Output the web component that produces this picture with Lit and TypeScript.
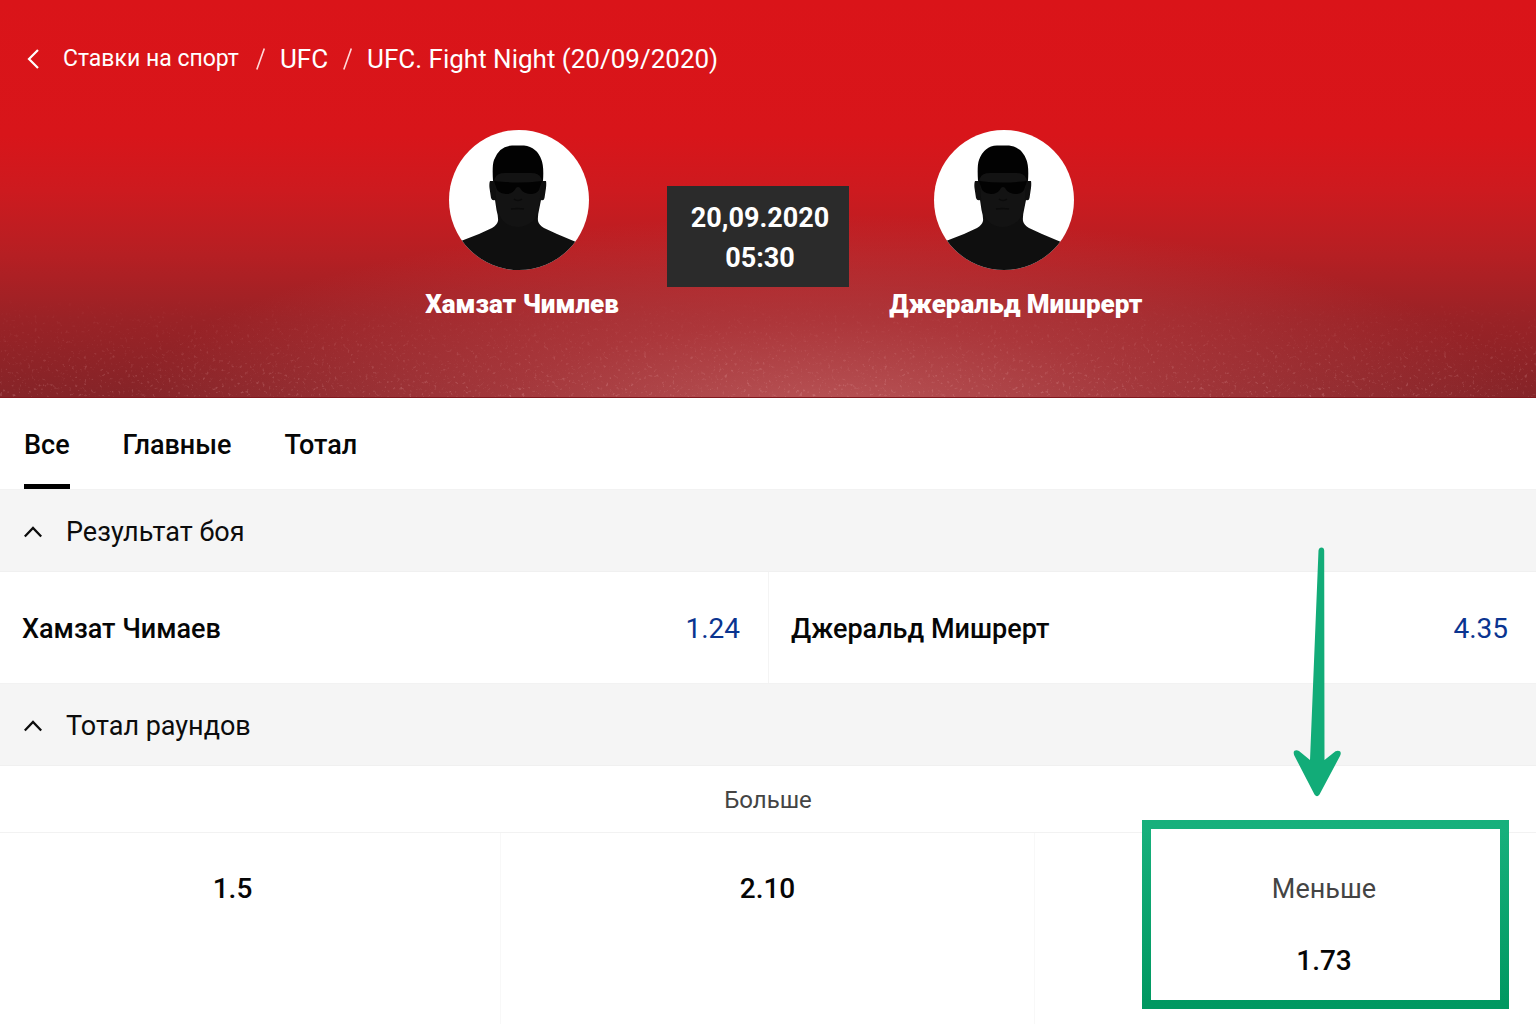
import { LitElement, html, css, svg } from "lit";
import { customElement, property, state } from "lit/decorators.js";
import { classMap } from "lit/directives/class-map.js";

@customElement("fighter-avatar")
export class FighterAvatar extends LitElement {
  static styles = css`
    :host {
      display: block;
      width: 140px;
      height: 140px;
    }
    .portrait {
      display: block;
      width: 100%;
      height: 100%;
    }
  `;

  render() {
    return html`
      <svg class="portrait" viewBox="0 0 140 140" aria-hidden="true">
        <defs>
          <clipPath id="round"><circle cx="70" cy="70" r="70" /></clipPath>
        </defs>
        <g clip-path="url(#round)">
          <rect width="140" height="140" fill="#fff" />
          <path
            d="M45 40 L44 51 L41 51 Q40 53 40.5 58 L42 68 Q43 71 46 70 L47.5 80 Q49.5 87 49 91 Q48 95 43 98 L30 104 L12 111 L-2 119 V142 H142 V119 L127 112 L108 104 L95 98 Q90 95 89 91 Q88.5 86 90 80 L92 70 Q95 71 95.5 68 L97 58 Q97.5 53 97 51 L94 51 L93 40 Z"
            fill="#0f0f0f"
          />
          <path
            d="M46 48 Q46 42 56 42 H82 Q92 42 92 48 L91 68 Q90 84 84 91 Q76 97 69 97 Q60 97 54 91 Q48 84 47 68 Z"
            fill="#131313"
          />
          <path
            d="M44 51 Q43 35 45 30 Q50 16 63 15.5 H75 Q88 17 92.5 30 Q95 36 94 51 L92 48 Q90 43 82 43 H56 Q48 43 46 48 Z"
            fill="#020202"
          />
          <path
            d="M45 51 Q69 54 93 51 L91 57 Q90 63 83 64 Q74 64 71 58 Q69 56 67 58 Q64 64 57 64 Q48 63 47 57 Z"
            fill="#020202"
          />
          <path d="M65 69 Q69 72 73 69" fill="none" stroke="#0b0b0b" stroke-width="1.5" />
          <path d="M62 79 Q69 78 75 79" fill="none" stroke="#0b0b0b" stroke-width="1.5" />
        </g>
      </svg>
    `;
  }
}

@customElement("market-header")
export class MarketHeader extends LitElement {
  @property() label = "";
  @property({ type: Boolean }) open = true;

  static styles = css`
    :host {
      display: block;
    }
    .title {
      margin: 0;
      font: inherit;
    }
    .toggle {
      box-sizing: border-box;
      display: flex;
      align-items: center;
      gap: 24px;
      width: 100%;
      padding: 25px 24px 22px;
      border: 0;
      border-top: 1px solid #f2f2f2;
      border-bottom: 1px solid #f0f0f0;
      background: #f5f5f5;
      color: #0c0c0c;
      font: inherit;
      font-size: 27px;
      line-height: 34px;
      text-align: left;
      cursor: pointer;
    }
    .chevron {
      flex: none;
      width: 18px;
      height: 12px;
    }
    .chevron--closed {
      transform: rotate(180deg);
    }
  `;

  render() {
    return html`
      <h2 class="title">
        <button
          class="toggle"
          type="button"
          aria-expanded=${this.open ? "true" : "false"}
          @click=${() => this.dispatchEvent(new CustomEvent("market-toggle"))}
        >
          <svg
            class=${classMap({ chevron: true, "chevron--closed": !this.open })}
            viewBox="0 0 18 12"
            aria-hidden="true"
          >
            <path d="M0.8 10.5 L9 2 L17.2 10.5" fill="none" stroke="#0c0c0c" stroke-width="2.3" />
          </svg>
          <span>${this.label}</span>
        </button>
      </h2>
    `;
  }
}

@customElement("app-root")
export class AppRoot extends LitElement {
  @state() private tab = "Все";
  @state() private closed: string[] = [];

  private tabs = ["Все", "Главные", "Тотал"];

  private outcomes = [
    { name: "Хамзат Чимаев", odds: "1.24" },
    { name: "Джеральд Мишрерт", odds: "4.35" },
  ];

  static styles = css`
    :host {
      display: flex;
      flex-direction: column;
      min-height: 100vh;
      overflow: hidden;
      background: #fff;
      color: #060606;
      font-family: Roboto, "Liberation Sans", sans-serif;
    }
    button {
      margin: 0;
      border: 0;
      background: none;
      color: inherit;
      font: inherit;
      cursor: pointer;
    }
    .hero {
      position: relative;
      padding: 42px 24px 75px;
      border-bottom: 1px solid #82181e;
      background:
        radial-gradient(ellipse 46% 52% at 54% 106%, rgba(206, 104, 106, 0.75), rgba(204, 84, 88, 0.4) 48%, rgba(200, 60, 64, 0) 100%),
        linear-gradient(#da1419 0%, #d8151a 34%, #cd1a1f 48%, #b61f23 64%, #9a2226 80%, #852428 100%);
      color: #fff;
    }
    .dust {
      position: absolute;
      inset: 0;
      width: 100%;
      height: 100%;
      opacity: 0.2;
      mask-image: linear-gradient(transparent 74%, #000 100%);
    }
    .crumbs {
      position: relative;
      display: flex;
      align-items: center;
      gap: 15px;
      font-size: 26px;
      line-height: 34px;
    }
    .crumb {
      color: inherit;
      text-decoration: none;
    }
    .crumb--root {
      padding-right: 2px;
      font-size: 23px;
    }
    .back {
      display: flex;
      padding: 0 9px 0 3px;
    }
    .back-icon {
      width: 12px;
      height: 20px;
    }
    .slash {
      width: 9px;
      height: 22px;
    }
    .match {
      position: relative;
      display: grid;
      grid-template-columns: 1fr auto 1fr;
      align-items: start;
      padding: 54px 28px 0 0;
    }
    .fighter {
      display: flex;
      flex-direction: column;
      align-items: flex-start;
      gap: 16px;
    }
    .fighter--home {
      justify-self: end;
    }
    .fighter--away {
      justify-self: start;
    }
    .fighter--home .face {
      margin-left: 24px;
    }
    .fighter--away .face {
      margin-left: 45px;
    }
    .fighter-name {
      font-size: 26px;
      font-weight: 900;
      line-height: 36px;
      white-space: nowrap;
    }
    .kickoff {
      display: flex;
      flex-direction: column;
      align-items: center;
      margin: 56px 40px 0 48px;
      padding: 12px 20px 9px 24px;
      background: #2b2b2b;
      font-size: 27px;
      font-weight: 700;
      line-height: 40px;
    }
    .tabs {
      display: flex;
      gap: 53px;
      padding: 0 24px;
    }
    .tab {
      padding: 31px 0 23px;
      border-bottom: 5px solid transparent;
      font-size: 27px;
      font-weight: 500;
      line-height: 32px;
    }
    .tab--active {
      border-bottom-color: #000;
    }
    .outcomes {
      display: grid;
      grid-template-columns: 1fr 1fr;
    }
    .outcome {
      display: flex;
      align-items: center;
      justify-content: space-between;
      padding: 40px 28px 37px 22px;
      font-size: 28px;
      line-height: 34px;
    }
    .outcome + .outcome {
      border-left: 1px solid #f4f4f4;
    }
    .outcome-name {
      font-size: 27px;
      font-weight: 500;
    }
    .outcome-odds {
      color: #0a3490;
    }
    .totals-head {
      padding: 17px 0 15px;
      border-bottom: 1px solid #f2f2f2;
      color: #444;
      font-size: 24px;
      line-height: 34px;
      text-align: center;
    }
    .totals {
      position: relative;
      z-index: 0;
      flex: 1;
      display: grid;
      grid-template-columns: 500fr 534fr 502fr;
      font-size: 28px;
      line-height: 34px;
    }
    .total {
      padding-top: 39px;
      text-align: center;
    }
    .total + .total {
      border-left: 1px solid #f8f8f8;
    }
    .total--line {
      padding-right: 35px;
    }
    .total--under {
      padding: 0 27px 0 107px;
    }
    .total-value {
      display: block;
      width: 100%;
      padding: 0;
      font-weight: 500;
    }
    .pick {
      position: relative;
      display: flex;
      flex-direction: column;
      align-items: center;
      gap: 38px;
      width: 100%;
      padding: 39px 3px 31px 0;
    }
    .pick-label {
      color: #444;
      font-size: 27px;
    }
    .pick-value {
      font-weight: 500;
    }
    .frame {
      position: absolute;
      inset: -13px 0 0;
      border: 9px solid;
      border-image: linear-gradient(#17b07c, #009861) 1;
      background: linear-gradient(#fff, #fff) top / 100% 24px no-repeat;
      z-index: -1;
      pointer-events: none;
    }
    .arrow {
      position: absolute;
      right: 167px;
      bottom: calc(100% + 35px);
      width: 50px;
      height: 251px;
      pointer-events: none;
    }
  `;

  private toggle(name: string) {
    this.closed = this.closed.includes(name)
      ? this.closed.filter((n) => n !== name)
      : [...this.closed, name];
  }

  private slash() {
    return html`
      <svg class="slash" viewBox="0 0 9 22" aria-hidden="true">
        ${svg`<path d="M8.3 0.5 L0.8 21.5" stroke="#ffd9d9" stroke-width="1.6" />`}
      </svg>
    `;
  }

  private renderHero() {
    return html`
      <header class="hero">
        <svg class="dust" aria-hidden="true">
          <filter id="grain" x="0" y="0" width="100%" height="100%">
            <feTurbulence type="fractalNoise" baseFrequency="0.32" numOctaves="3" seed="8" />
            <feColorMatrix values="0 0 0 0 1  0 0 0 0 0.62  0 0 0 0 0.62  3.4 2.6 0 0 -3.5" />
          </filter>
          <rect width="100%" height="100%" filter="url(#grain)" />
        </svg>
        <nav class="crumbs" aria-label="Ставки на спорт">
          <a class="back" href="#" aria-label="Ставки на спорт">
            <svg class="back-icon" viewBox="0 0 12 20" aria-hidden="true">
              <path d="M11 1 L2 10 L11 19" fill="none" stroke="#fff" stroke-width="2.2" />
            </svg>
          </a>
          <a class="crumb crumb--root" href="#">Ставки на спорт</a>
          ${this.slash()}
          <a class="crumb" href="#">UFC</a>
          ${this.slash()}
          <a class="crumb" href="#">UFC. Fight Night (20/09/2020)</a>
        </nav>
        <div class="match">
          <div class="fighter fighter--home">
            <fighter-avatar class="face"></fighter-avatar>
            <span class="fighter-name">Хамзат Чимлев</span>
          </div>
          <div class="kickoff"><span>20,09.2020</span><span>05:30</span></div>
          <div class="fighter fighter--away">
            <fighter-avatar class="face"></fighter-avatar>
            <span class="fighter-name">Джеральд Мишрерт</span>
          </div>
        </div>
      </header>
    `;
  }

  private renderOutcomes() {
    return html`
      <div class="outcomes">
        ${this.outcomes.map(
          (o) => html`
            <button class="outcome" type="button">
              <span class="outcome-name">${o.name}</span>
              <span class="outcome-odds">${o.odds}</span>
            </button>
          `,
        )}
      </div>
    `;
  }

  private renderTotals() {
    return html`
      <div class="totals-head">Больше</div>
      <div class="totals">
        <div class="total total--line"><span class="total-value">1.5</span></div>
        <div class="total"><button class="total-value" type="button">2.10</button></div>
        <div class="total total--under">
          <button class="pick" type="button">
            <span class="pick-label">Меньше</span>
            <span class="pick-value">1.73</span>
            <span class="frame"></span>
            <svg class="arrow" viewBox="0 0 50 251" aria-hidden="true">
              <path
                d="M26.5 3.5 Q27 0.6 29.5 0.6 Q32 0.6 32.2 3.5 L32.5 213 L43.5 204.3 Q46 203 48 204.3 Q49.5 206 48 209 L27.5 247.5 Q25 251 22.5 247.5 L2.3 208.5 Q1 205 2.5 203.7 Q4.5 202.5 7 204 L18 213 Z"
                fill="#12ac78"
              />
            </svg>
          </button>
        </div>
      </div>
    `;
  }

  render() {
    const fight = "Результат боя";
    const rounds = "Тотал раундов";
    return html`
      ${this.renderHero()}
      <nav class="tabs">
        ${this.tabs.map(
          (t) => html`
            <button
              type="button"
              class=${classMap({ tab: true, "tab--active": t === this.tab })}
              aria-pressed=${t === this.tab ? "true" : "false"}
              @click=${() => (this.tab = t)}
            >
              ${t}
            </button>
          `,
        )}
      </nav>
      <market-header
        .label=${fight}
        .open=${!this.closed.includes(fight)}
        @market-toggle=${() => this.toggle(fight)}
      ></market-header>
      ${this.closed.includes(fight) ? "" : this.renderOutcomes()}
      <market-header
        .label=${rounds}
        .open=${!this.closed.includes(rounds)}
        @market-toggle=${() => this.toggle(rounds)}
      ></market-header>
      ${this.closed.includes(rounds) ? "" : this.renderTotals()}
    `;
  }
}
